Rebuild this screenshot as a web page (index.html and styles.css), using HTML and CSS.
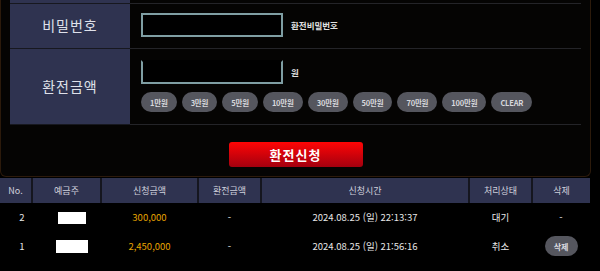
FILE: index.html
```html
<!DOCTYPE html>
<html lang="ko">
<head>
<meta charset="UTF-8">
<title>환전신청</title>
<link rel="stylesheet" href="styles.css">
</head>
<body>

<div class="exchange-box">
  <table class="form-table">
    <tr class="cut-row">
      <th></th>
      <td></td>
    </tr>
    <tr class="row-pass">
      <th>비밀번호</th>
      <td>
        <div class="field">
          <input type="password" class="input">
          <span class="hint">환전비밀번호</span>
        </div>
      </td>
    </tr>
    <tr class="row-amount">
      <th>환전금액</th>
      <td>
        <div class="field">
          <input type="text" class="input input-amount">
          <span class="hint">원</span>
        </div>
        <div class="quick-btns">
          <button>1만원</button>
          <button>3만원</button>
          <button>5만원</button>
          <button>10만원</button>
          <button>30만원</button>
          <button>50만원</button>
          <button>70만원</button>
          <button>100만원</button>
          <button>CLEAR</button>
        </div>
      </td>
    </tr>
  </table>

  <div class="submit-area">
    <button class="submit-btn">환전신청</button>
  </div>
</div>

<table class="list-table">
  <thead>
    <tr>
      <th class="c-no">No.</th>
      <th class="c-name">예금주</th>
      <th class="c-req">신청금액</th>
      <th class="c-ex">환전금액</th>
      <th class="c-time">신청시간</th>
      <th class="c-state">처리상태</th>
      <th class="c-del">삭제</th>
    </tr>
  </thead>
  <tbody>
    <tr>
      <td class="num">2</td>
      <td class="name"><span class="masked"></span></td>
      <td class="money">300,000</td>
      <td>-</td>
      <td>2024.08.25 (일) 22:13:37</td>
      <td>대기</td>
      <td>-</td>
    </tr>
    <tr>
      <td class="num">1</td>
      <td class="name"><span class="masked wide"></span></td>
      <td class="money">2,450,000</td>
      <td>-</td>
      <td>2024.08.25 (일) 21:56:16</td>
      <td>취소</td>
      <td><button class="del-btn">삭제</button></td>
    </tr>
  </tbody>
</table>

</body>
</html>
```

FILE: styles.css
```css
/* Reset */
* {
  box-sizing: border-box;
  margin: 0;
  padding: 0;
  font-family: 'Noto Sans CJK KR', 'Noto Sans', sans-serif;
}

body {
  background: #000000;
  color: #e6e6e6;
  width: 600px;
  overflow: hidden;
}

/* Exchange form box */
.exchange-box {
  width: 591px;
  padding: 0 9px 9px 9px;
  background: #050403;
  border: 1px solid #2c1a0b;
  border-top: none;
  border-radius: 0 0 6px 6px;
}

.form-table {
  width: 100%;
  border-collapse: collapse;
}

.form-table th {
  width: 120px;
  background: #2f3350;
  color: #dfe1ea;
  font-size: 14px;
  font-weight: normal;
  letter-spacing: 1px;
  border-bottom: 1px solid #17181f;
}

.form-table td {
  padding-left: 11px;
  border-bottom: 1px solid #242428;
}

.cut-row th,
.cut-row td {
  height: 3px;
}

.row-pass th,
.row-pass td {
  height: 45px;
  padding-bottom: 2px;
}

.row-amount th,
.row-amount td {
  height: 76px;
}

.field {
  display: flex;
  align-items: center;
  gap: 8px;
}

.input {
  width: 142px;
  height: 24px;
  background: #000000;
  border: 2px solid #7f9ea3;
  outline: none;
}

.input-amount {
  border-top-color: #000000;
}

.hint {
  font-size: 8.5px;
  font-weight: bold;
  color: #e2e2e2;
}

.quick-btns {
  display: flex;
  gap: 5px;
  margin-top: 8px;
}

.quick-btns button {
  height: 20px;
  padding: 0 9px;
  border: none;
  border-radius: 10px;
  background: #55565e;
  color: #d8d8dc;
  font-size: 7.5px;
  font-weight: bold;
  letter-spacing: -0.2px;
}

/* Submit */
.submit-area {
  display: flex;
  justify-content: center;
  padding: 17px 0 0;
}

.submit-btn {
  width: 134px;
  height: 25px;
  border: none;
  border-radius: 3px;
  background: linear-gradient(#ff0505, #a3000f);
  color: #ffffff;
  font-size: 13px;
  font-weight: bold;
  letter-spacing: 1px;
}

/* List */
.list-table {
  width: 590px;
  margin-top: 1px;
  border-collapse: collapse;
  text-align: center;
}

.list-table th {
  height: 25px;
  background: #2f3350;
  color: #cfd1dc;
  font-size: 9px;
  font-weight: normal;
  border-left: 2px solid #15161f;
}

.list-table th:first-child {
  border-left: none;
}

.c-no { width: 32px; }
.c-name { width: 69px; }
.c-req { width: 97px; }
.c-ex { width: 63px; }
.c-time { width: 208px; }
.c-state { width: 63px; }
.c-del { width: 58px; }

.list-table td {
  height: 29px;
  font-size: 9.5px;
  color: #e6e6e6;
}

.list-table td.num {
  padding-left: 12px;
}

.list-table td.name {
  padding-left: 10px;
}

.list-table td.money {
  color: #e5a300;
}

.masked {
  display: inline-block;
  width: 28px;
  height: 12px;
  background: #ffffff;
  vertical-align: middle;
}

.masked.wide {
  width: 32px;
  height: 13px;
}

.del-btn {
  width: 33px;
  height: 20px;
  border: none;
  border-radius: 10px;
  background: #55565e;
  color: #dcdce0;
  font-size: 8px;
  font-weight: bold;
}
```
